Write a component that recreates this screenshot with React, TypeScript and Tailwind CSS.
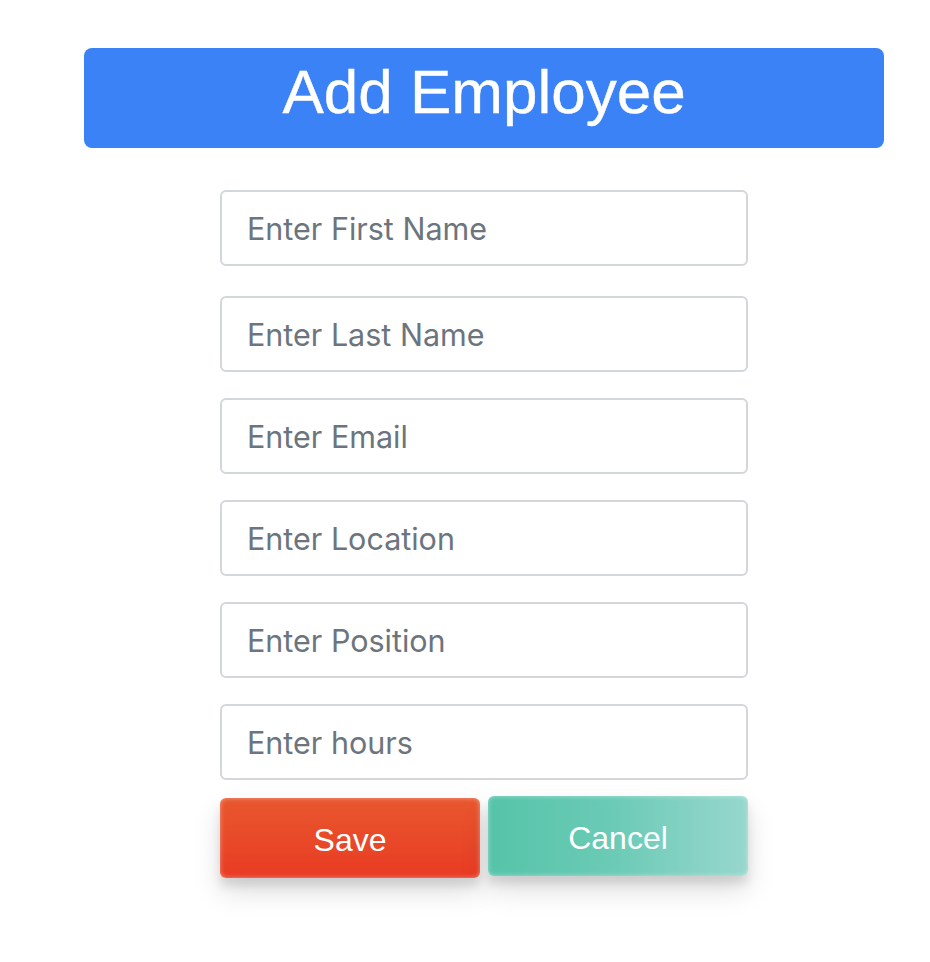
const fields = [
  'Enter First Name',
  'Enter Last Name',
  'Enter Email',
  'Enter Location',
  'Enter Position',
  'Enter hours',
]

export default function App() {
  return (
    <div className="min-h-screen bg-white pl-[84px] pt-[48px] font-['Liberation_Sans',Arial,sans-serif]">
      <div className="w-[800px]">
        <div className="flex h-[100px] items-center justify-center rounded-lg bg-[#3b82f6] pb-[12px]">
          <h1 className="text-[62px] leading-none text-white [-webkit-text-stroke:0.4px_white]">Add Employee</h1>
        </div>
        <form className="mx-auto mt-[42px] flex w-[528px] flex-col">
          {fields.map((placeholder, i) => (
            <input
              key={placeholder}
              type="text"
              placeholder={placeholder}
              className={[
                'h-[76px] w-full rounded-md border-2 border-[#d3d6da] bg-white px-[25px] font-[Inter,sans-serif] text-[30.5px] text-gray-700 outline-none placeholder:text-[#6c757d]',
                i === 0 ? '' : i === 1 ? 'mt-[30px]' : 'mt-[26px]',
              ].join(' ')}
            />
          ))}
          <div className="mt-[16px] flex gap-2">
            <button
              type="button"
              className="mt-[2px] h-[80px] w-[260px] rounded-md bg-gradient-to-b from-[#e8572e] to-[#e93a23] pt-[4px] text-[32px] text-white shadow-[inset_0_0_5px_rgba(255,255,255,0.45),0_14px_28px_rgba(0,0,0,0.13),0_8px_10px_rgba(0,0,0,0.1)]"
            >
              Save
            </button>
            <button
              type="button"
              className="h-[80px] w-[260px] rounded-md bg-gradient-to-r from-[#55c4a9] via-[#6ccbb6] to-[#97d7cd] pt-[4px] text-[32px] text-white shadow-[inset_0_0_5px_rgba(255,255,255,0.45),0_14px_28px_rgba(0,0,0,0.13),0_8px_10px_rgba(0,0,0,0.1)]"
            >
              Cancel
            </button>
          </div>
        </form>
      </div>
    </div>
  )
}
